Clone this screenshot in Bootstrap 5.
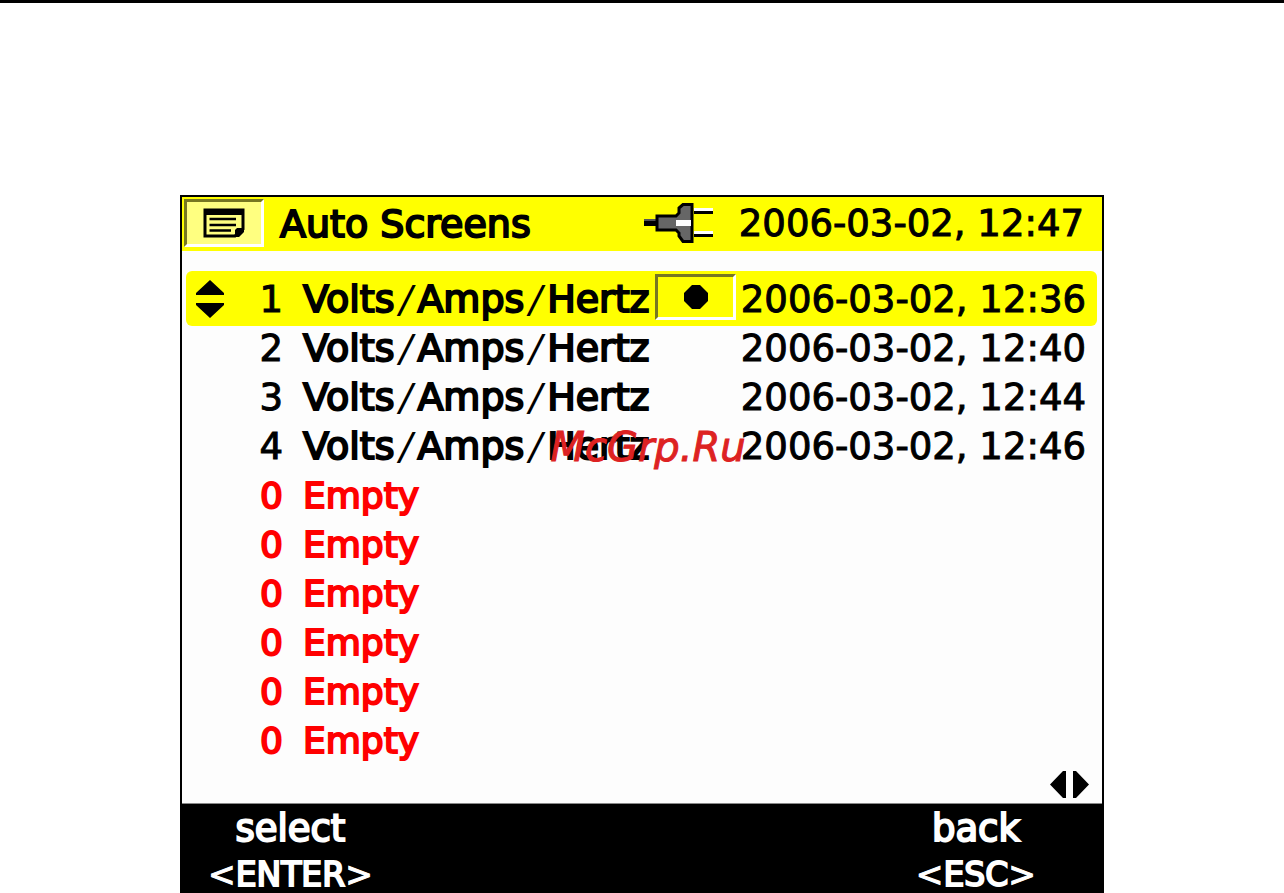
<!DOCTYPE html>
<html lang="en">
<head>
<meta charset="utf-8">
<meta name="viewport" content="width=device-width, initial-scale=1">
<title>Auto Screens</title>
<link href="https://cdn.jsdelivr.net/npm/bootstrap@5.3.0/dist/css/bootstrap.min.css" rel="stylesheet">
<style>
body { font-family: "DejaVu Sans", sans-serif; font-size: 37px; color: #000; background: #fff; border-top: 3px solid #000; }
.device { max-width: 924px; margin-top: 192px; border: 2px solid #000; border-bottom: 0; background: #fdfdfd; -webkit-text-stroke: 1px; white-space: nowrap; }
.title-bar { height: 54px; background: #ff0; padding: 2px 18px 4px 2px; }
.title-bar h1, .title-bar time { font-size: 37px; line-height: 52px; font-weight: 400; padding-top: 2px; }
.title-bar h1 { font-size: 38px; -webkit-text-stroke: 2px; }
.sunk { border: 3px solid #fff; border-top-color: #777722; border-left-color: #777722; border-radius: 0; background: #ff0; }
.menu-btn { width: 80px; height: 48px; background: #ffff80; }
.plug { margin-right: 25px; }
.log { width: calc(100% - 9px); margin: 20px 5px 0 4px; table-layout: fixed; line-height: 45px; }
.log td { height: 49px; padding: 0; vertical-align: top; }
.log .chosen td { height: 55px; padding-top: 6px; background: #ff0; }
.log .chosen td:first-child { border-radius: 6px 0 0 6px; }
.log .chosen td:last-child { border-radius: 0 6px 6px 0; }
.log .chosen td.mark-cell { padding-top: 3px; }
.log .chosen td:first-child { padding: 9px 0 0 10px; line-height: 0; }
.log .chosen span.num { line-height: 39px; }
.log td.stamp { padding-right: 11px; }
.log td.title { padding-left: 20px; font-size: 38px; -webkit-text-stroke: 2px; }
.log .vacant td, .log .vacant td.title { color: #f00; font-size: 36px; -webkit-text-stroke: 2px; }
.slash { padding: 0 5px; -webkit-text-stroke: 0; font-style: italic; }
.mark-box { width: 81px; height: 46px; }
.pager { height: 36px; padding: 4px 13px 0 0; }
.keys { background: #000; border-top: 1px solid #888; padding: 4px 66px 0 26px; -webkit-text-stroke: 2px; }
.key { color: #fff; background: none; border: 0; line-height: 42px; }
.key small { display: block; font-size: 33px; line-height: 36px; margin-top: 7px; }
.key .angle { -webkit-text-stroke: 1px; }
.watermark { inset: 152px 0 auto 12px; text-align: center; color: #d22; font-style: italic; font-size: 40px; line-height: 48px; -webkit-text-stroke: 1px; pointer-events: none; }
</style>
</head>
<body>
<main class="device mx-auto">
  <header class="title-bar d-flex align-items-center">
    <button class="menu-btn sunk p-0 d-flex align-items-center justify-content-center" type="button" aria-label="Menu">
      <svg width="42" height="30" viewBox="0 0 42 30"><path fill="none" stroke="#000" stroke-width="3" d="M2 2H40V21L32 28H2Z"/><path d="M1 1H41V7H1ZM41 20H34L32 22V29H36L41 24Z"/><path stroke="#000" stroke-width="2.600" d="M6.500 11H33M6.500 17H33M6.500 22.500H28"/></svg>
    </button>
    <h1 class="mb-0 ms-3">Auto Screens</h1>
    <svg class="plug ms-auto" width="70" height="42" viewBox="0 0 70 42"><path d="M0 18H14V24H0Z"/><path fill="#555" d="M0 17H13V19H0Z"/><path fill="#666" stroke="#000" stroke-width="3" d="M13 14H32L35 11V6L39 2.500H48V39.500H39L35 34V31L32 28H13Z"/><path fill="#fff" d="M32 18H47V24H32ZM50 6H69V9H50ZM50 29H69V32H50Z"/><path d="M50 9H69V12H50ZM50 32H69V35H50Z"/></svg>
    <time datetime="2006-03-02T12:47">2006-03-02, 12:47</time>
  </header>

  <div class="position-relative">
    <table class="log">
      <colgroup><col style="width:97px"><col><col style="width:81px"><col style="width:361px"></colgroup>
      <tbody id="rows"></tbody>
    </table>
    <div class="watermark position-absolute">McGrp.Ru</div>
    <div class="pager d-flex justify-content-end align-items-start">
      <svg width="39" height="27" viewBox="0 0 39 27"><path d="M0 13.500L13 0H16V27H13ZM39 13.500L26 0H23V27H26Z"/></svg>
    </div>
  </div>

  <footer class="keys d-flex justify-content-between">
    <button class="key p-0" type="button">select<small><span class="angle">&lt;</span>ENTER<span class="angle">&gt;</span></small></button>
    <button class="key p-0" type="button">back<small><span class="angle">&lt;</span>ESC<span class="angle">&gt;</span></small></button>
  </footer>
</main>

<script src="https://cdn.jsdelivr.net/npm/bootstrap@5.3.0/dist/js/bootstrap.bundle.min.js"></script>
<script>
const screenName = 'Volts<span class="slash">/</span>Amps<span class="slash">/</span>Hertz';
const arrows = '<svg width="28" height="38" viewBox="0 0 28 38"><path d="M14 0L28 13V15H0V13ZM14 38L28 25V23H0V25Z"/></svg>';
const dot = '<div class="mark-box sunk d-flex align-items-center justify-content-center"><svg width="24" height="24" viewBox="0 0 24 24"><path d="M8 0H16L24 8V16L16 24H8L0 16V8Z"/></svg></div>';
const times = ['12:36', '12:40', '12:44', '12:46'];
let html = '';
for (let i = 0; i < 10; i++) {
  const t = times[i];
  const first = i === 0;
  html += `<tr class="${first ? 'chosen' : t ? '' : 'vacant'}">` +
    (first ? `<td><div class="d-flex justify-content-between">${arrows}<span class="num">1</span></div></td>`
           : `<td class="text-end">${t ? i + 1 : 0}</td>`) +
    `<td class="title">${t ? screenName : 'Empty'}</td>` +
    `<td class="mark-cell">${first ? dot : ''}</td>` +
    `<td class="stamp text-end">${t ? '2006-03-02, ' + t : ''}</td></tr>`;
}
document.getElementById('rows').innerHTML = html;
</script>
</body>
</html>
